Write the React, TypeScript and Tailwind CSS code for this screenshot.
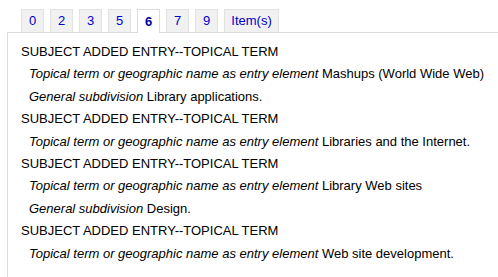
import React from 'react'

const tabs = ['0', '2', '3', '5', '6', '7', '9', 'Item(s)']

type Field = { label: string; value: string }
type Entry = { fields: Field[] }

const TOPICAL = 'Topical term or geographic name as entry element'
const GENERAL = 'General subdivision'

const entries: Entry[] = [
    { fields: [{ label: TOPICAL, value: 'Mashups (World Wide Web)' }, { label: GENERAL, value: 'Library applications.' }] },
    { fields: [{ label: TOPICAL, value: 'Libraries and the Internet.' }] },
    { fields: [{ label: TOPICAL, value: 'Library Web sites' }, { label: GENERAL, value: 'Design.' }] },
    { fields: [{ label: TOPICAL, value: 'Web site development.' }] },
]

function App() {
    return <>
        <div className="min-h-[277px] bg-white pl-[7px] pt-[9px] text-[13px] text-black" style={{ fontFamily: '"Liberation Sans", Arial, sans-serif' }}>
            <ul className="ml-[14px] flex gap-[6px]">
                {tabs.map((t) => (
                    <li key={t}
                        className={(t.length > 1 ? 'w-[55px] ' : 'w-[23px] ') + (t === '6'
                            ? 'relative -mb-px flex h-[24px] items-center justify-center border border-b-0 border-[#dcdcdc] bg-white font-bold text-[#000099]'
                            : 'flex h-[23px] items-center justify-center border border-b-0 border-[#e2e2e2] bg-[#f1f1f1] text-[#0000cc]')}>
                        {t}
                    </li>
                ))}
            </ul>
            <div className="min-h-[245px] border-l border-t border-[#dcdcdc] pl-[13px] pt-[8px]">
                {entries.map((e, i) => (
                    <div key={i}>
                        <div className="leading-[22.4px]">SUBJECT ADDED ENTRY--TOPICAL TERM</div>
                        {e.fields.map((f, j) => (
                            <div key={j} className="pl-[8px] leading-[22.4px]">
                                <i>{f.label}</i> {f.value}
                            </div>
                        ))}
                    </div>
                ))}
            </div>
        </div>
    </>
}

export default App
